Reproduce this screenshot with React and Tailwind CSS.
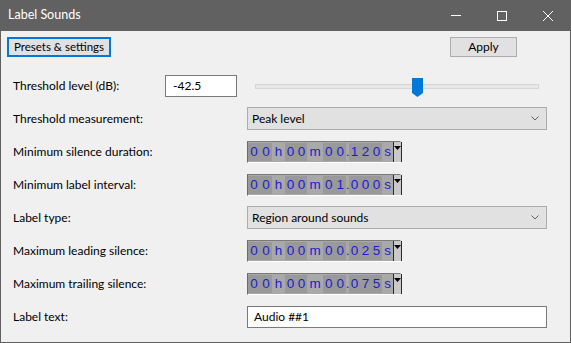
import React from 'react';

const font = { fontFamily: 'Lato, "Noto Sans", "Liberation Sans", sans-serif' };

const Digits = ({ text, w }) => (
  <div className="flex h-full bg-[#999999]">
    {text.split('').map((d, i) => (
      <span key={i} className={`flex items-center justify-center ${w}`}>{d}</span>
    ))}
  </div>
);

const TimeControl = ({ value }) => {
  // value like "00h00m00.120s"
  const [hh, rest1] = value.split('h');
  const [mm, rest2] = rest1.split('m');
  const [ss, frac] = rest2.replace('s', '').split('.');

  return (
    <div
      className="flex h-[22px] w-[154px] border border-t-[#7a7a7a] border-l-[#6a6a6a] border-r-[#f8f8f8] border-b-[#ffffff] bg-[#a9a9a9] text-[13.5px] leading-none text-[#1c1cd0]"
      style={{ fontFamily: '"Liberation Sans", Arial, sans-serif' }}
    >
      <div className="flex flex-1 py-[1px]">
        <Digits text={hh} w="w-[12px]" />
        <span className="flex w-[13px] items-center justify-center">h</span>
        <Digits text={mm} w="w-[11px]" />
        <span className="flex w-[16px] items-center justify-center">m</span>
        <Digits text={ss} w="w-[11.5px]" />
        <span className="flex w-[3px] items-center justify-center">.</span>
        <Digits text={frac} w="w-[11px]" />
        <span className="flex w-[11px] items-center justify-center">s</span>
      </div>
      <div className="flex h-full w-[9px] flex-col items-center border-x border-[#2a2a2a] bg-[#c9c9c9] pt-[4px]">
        <svg width="7" height="4" viewBox="0 0 7 4">
          <path d="M0 0 H7 L3.5 4 Z" fill="#000" />
        </svg>
      </div>
    </div>
  );
};

const Dropdown = ({ value }) => (
  <div className="flex h-[23px] w-[300px] items-center justify-between border border-[#acacac] bg-[#e1e1e1] pl-[4px] pr-[7px]">
    <span>{value}</span>
    <svg width="8" height="5" viewBox="0 0 8 5">
      <path d="M0.5 0.5 L4 4 L7.5 0.5" fill="none" stroke="#606060" strokeWidth="1" />
    </svg>
  </div>
);

const Row = ({ label, labelWidth = 'w-[234px]', children }) => (
  <div className="flex h-[33px] items-center pl-[12px]">
    <div className={`${labelWidth} shrink-0`}>{label}</div>
    {children}
  </div>
);

export default function App() {
  return (
    <div
      className="flex h-[343px] w-[571px] flex-col overflow-hidden border border-t-0 border-[#616161] bg-[#f0f0f0] text-[12px] text-black"
      style={font}
    >
      {/* Title bar */}
      <div className="-mx-[1px] flex h-[31px] shrink-0 items-center bg-[#616161] text-white">
        <span className="pl-[8px] text-[12.5px]">Label Sounds</span>
        <div className="ml-auto flex h-full items-center">
          <div className="flex h-full w-[46px] items-center justify-center">
            <svg width="10" height="1" viewBox="0 0 10 1">
              <rect width="10" height="1" fill="#fff" />
            </svg>
          </div>
          <div className="flex h-full w-[46px] items-center justify-center">
            <svg width="10" height="10" viewBox="0 0 10 10">
              <rect x="0.5" y="0.5" width="9" height="9" fill="none" stroke="#fff" strokeWidth="1" />
            </svg>
          </div>
          <div className="flex h-full w-[46px] items-center justify-center">
            <svg width="10" height="10" viewBox="0 0 10 10">
              <path d="M0 0 L10 10 M10 0 L0 10" stroke="#fff" strokeWidth="1" />
            </svg>
          </div>
        </div>
      </div>

      {/* Buttons */}
      <div className="flex items-center pl-[6px] pr-[53px] pt-[6px]">
        <button className="h-[20px] w-[104px] whitespace-nowrap border-2 border-[#0078d7] bg-[#e1e1e1] text-[11.5px] leading-none">
          Presets &amp; settings
        </button>
        <button className="ml-auto h-[20px] w-[67px] border border-[#adadad] bg-[#e1e1e1] text-[12px] leading-none">
          Apply
        </button>
      </div>

      {/* Form */}
      <div className="mt-[12px] flex flex-col">
        <Row label="Threshold level (dB):" labelWidth="w-[152px]">
          <div className="flex h-[22px] w-[72px] items-center border border-[#7a7a7a] bg-white pl-[7px]">-42.5</div>
          <div className="relative ml-[18px] h-[22px] w-[284px]">
            <div className="absolute left-0 right-0 top-[9px] h-[5px] border border-[#d6d6d6] bg-[#e7e7e7]" />
            <svg className="absolute left-[157px] top-[3px]" width="11" height="19" viewBox="0 0 11 19">
              <path d="M0 0 H11 V15 L5.5 19 L0 15 Z" fill="#0078d7" />
            </svg>
          </div>
        </Row>
        <Row label="Threshold measurement:">
          <Dropdown value="Peak level" />
        </Row>
        <Row label="Minimum silence duration:">
          <TimeControl value="00h00m00.120s" />
        </Row>
        <Row label="Minimum label interval:">
          <TimeControl value="00h00m01.000s" />
        </Row>
        <Row label="Label type:">
          <Dropdown value="Region around sounds" />
        </Row>
        <Row label="Maximum leading silence:">
          <TimeControl value="00h00m00.025s" />
        </Row>
        <Row label="Maximum trailing silence:">
          <TimeControl value="00h00m00.075s" />
        </Row>
        <Row label="Label text:">
          <div className="flex h-[22px] w-[300px] items-center border border-[#7a7a7a] bg-white pl-[6px]">Audio ##1</div>
        </Row>
      </div>
    </div>
  );
}
